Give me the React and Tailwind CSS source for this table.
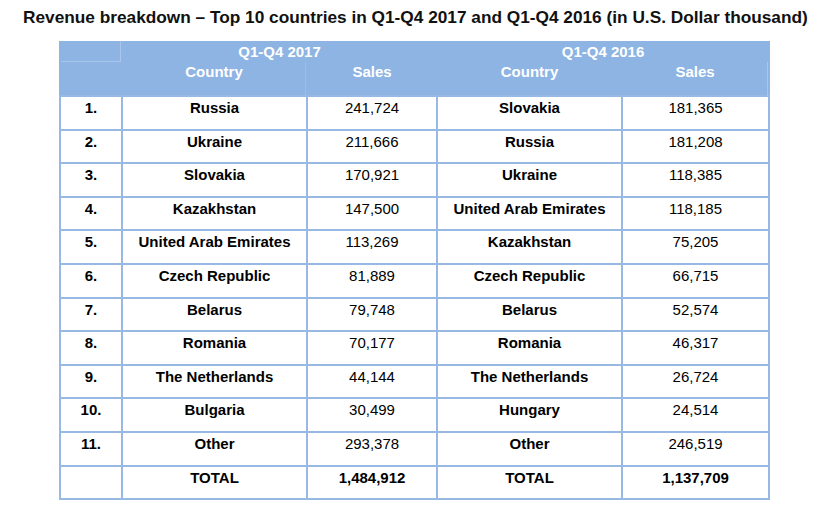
import React from "react";

const rows = [
  ["1.", "Russia", "241,724", "Slovakia", "181,365"],
  ["2.", "Ukraine", "211,666", "Russia", "181,208"],
  ["3.", "Slovakia", "170,921", "Ukraine", "118,385"],
  ["4.", "Kazakhstan", "147,500", "United Arab Emirates", "118,185"],
  ["5.", "United Arab Emirates", "113,269", "Kazakhstan", "75,205"],
  ["6.", "Czech Republic", "81,889", "Czech Republic", "66,715"],
  ["7.", "Belarus", "79,748", "Belarus", "52,574"],
  ["8.", "Romania", "70,177", "Romania", "46,317"],
  ["9.", "The Netherlands", "44,144", "The Netherlands", "26,724"],
  ["10.", "Bulgaria", "30,499", "Hungary", "24,514"],
  ["11.", "Other", "293,378", "Other", "246,519"],
  ["", "TOTAL", "1,484,912", "TOTAL", "1,137,709"],
];

const cols = "grid-cols-[60px_183px_128px_183px_145px]";

export default function App() {
  return (
    <div
      className="w-[840px] h-[516px] bg-white text-black overflow-hidden"
      style={{ fontFamily: '"Liberation Sans", Arial, sans-serif' }}
    >
      <div className="pl-[23px] pt-[7px] h-[41px] text-[17.25px] leading-[20px] font-bold text-[#111] whitespace-nowrap">
        Revenue breakdown – Top 10 countries in Q1-Q4 2017 and Q1-Q4 2016 (in U.S. Dollar thousand)
      </div>
      <div className="ml-[59px] w-[711px]">
        {/* Header */}
        <div
          className={`grid ${cols} grid-rows-[21px_34px] gap-x-[2px] px-[2px] bg-[#8db4e2] text-white font-bold text-[15px] leading-[18px] text-center`}
        >
          <div className="border-r border-b border-[#a9c5ea]" />
          <div className="col-span-2 pt-[2px]">Q1-Q4 2017</div>
          <div className="col-span-2 pt-[2px]">Q1-Q4 2016</div>
          <div />
          <div className="pt-[1px] border-r border-[#9fbde6]">Country</div>
          <div className="pt-[1px]">Sales</div>
          <div className="pt-[1px]">Country</div>
          <div className="pt-[1px] border-r border-[#a9c5ea]">Sales</div>
        </div>
        {/* Body */}
        <div
          className={`grid ${cols} auto-rows-[31.6px] gap-[2px] p-[2px] -mt-[1px] bg-[#97b9e4] text-[15px] leading-[18px] text-center`}
        >
          {rows.map((r, i) => {
            const total = i === rows.length - 1;
            return (
              <React.Fragment key={i}>
                <div className="bg-white pt-[2px] font-bold">{r[0]}</div>
                <div className="bg-white pt-[2px] font-bold">{r[1]}</div>
                <div className={`bg-white pt-[2px] ${total ? "font-bold" : ""}`}>{r[2]}</div>
                <div className="bg-white pt-[2px] font-bold">{r[3]}</div>
                <div className={`bg-white pt-[2px] ${total ? "font-bold" : ""}`}>{r[4]}</div>
              </React.Fragment>
            );
          })}
        </div>
      </div>
    </div>
  );
}
